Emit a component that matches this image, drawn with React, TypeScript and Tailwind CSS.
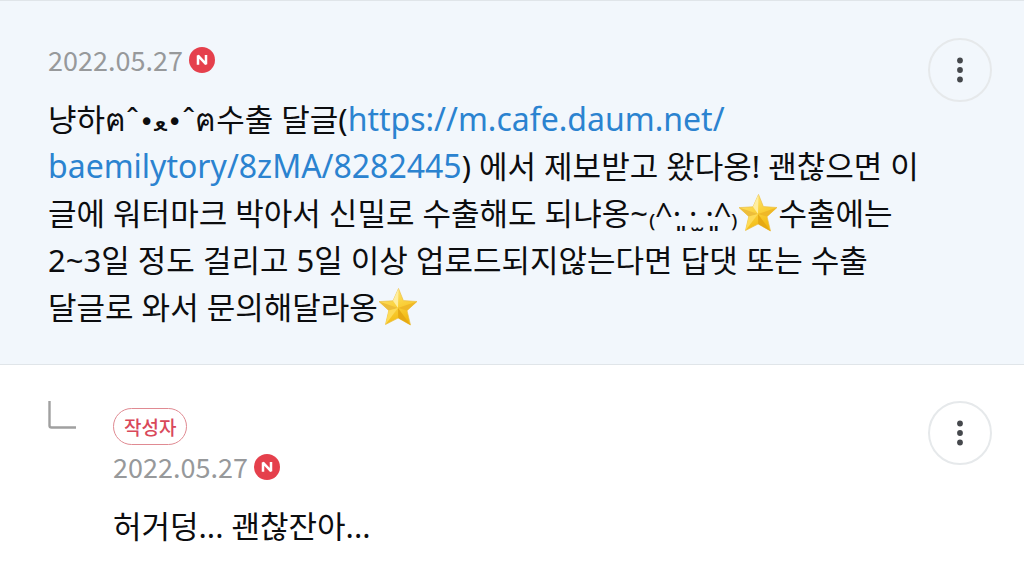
import type { ReactNode } from 'react';

function NewBadge() {
  return (
    <svg width="26" height="26" viewBox="0 0 26 26" role="img" aria-label="N">
      <circle cx="13" cy="13" r="13" fill="#e5404c" />
      <path
        d="M9 17.8V8.6L17 17.2V8"
        fill="none"
        stroke="#fff"
        strokeWidth="2.5"
        strokeLinejoin="bevel"
      />
    </svg>
  );
}

function Star() {
  return (
    <svg className="-mt-2 inline-block align-middle" width="40" height="40" viewBox="0 0 40 40" role="img" aria-label="⭐">
      <defs>
        <linearGradient id="star" x1="0" y1="0" x2="0.4" y2="1">
          <stop offset="0" stopColor="#fde884" />
          <stop offset="0.5" stopColor="#fbd443" />
          <stop offset="1" stopColor="#f2b90f" />
        </linearGradient>
      </defs>
      <path
        d="M20.5 1.5L25.4 13.6L39 14.5L29 23.6L32.5 38L20.2 31L7.5 37.5L10.8 23.4L1 14.6L15 13.8Z"
        fill="url(#star)"
        stroke="#ebc04a"
        strokeWidth="0.7"
        strokeLinejoin="round"
      />
      <path d="M20.5 1.5L20 21L15 13.8Z" fill="#feeea0" />
      <path d="M1 14.6L20 21L10.8 23.4Z" fill="#edbd3a" />
      <path d="M39 14.5L20 21L29 23.6Z" fill="#efb827" />
      <path d="M32.5 38L20 21L20.2 31Z" fill="#e6a914" />
      <path d="M7.5 37.5L20 21L10.8 23.4Z" fill="#fddb58" />
    </svg>
  );
}

function MoreButton() {
  return (
    <button
      type="button"
      aria-label="더보기"
      className="flex size-16 shrink-0 items-center justify-center rounded-full border-2 border-[#e6e9eb]"
    >
      <svg width="6" height="26" viewBox="0 0 6 26" fill="#45484c">
        <circle cx="3" cy="3.5" r="2.9" />
        <circle cx="3" cy="13" r="2.9" />
        <circle cx="3" cy="22.5" r="2.9" />
      </svg>
    </button>
  );
}

function DateRow({ date }: { date: string }) {
  return (
    <div className="flex items-center gap-1.5 text-[27px] leading-[43px] text-[#97999b]">
      <time>{date}</time>
      <NewBadge />
    </div>
  );
}

function CommentText({ children }: { children: ReactNode }) {
  return (
    <p className="font-['Noto_Sans','Noto_Sans_CJK_KR',sans-serif] text-[31px] leading-[47px] whitespace-nowrap text-[#0c0d0f]">
      {children}
    </p>
  );
}

export default function App() {
  return (
    <main className="min-h-screen bg-white font-['Noto_Sans_CJK_KR',sans-serif]">
      <article className="flex justify-between border-y border-[#e0e5e9] bg-[#f2f7fc] pt-[37px] pr-8 pb-[33px] pl-12">
        <div className="min-w-0">
          <DateRow date="2022.05.27" />
          <div className="mt-[15px]">
            <CommentText>
              냥하ฅˆ
              <span className="font-['DejaVu_Sans',sans-serif] text-[26px] leading-none">•ﻌ•</span>
              ˆฅ수출 달글(
              <a
                href="https://m.cafe.daum.net/baemilytory/8zMA/8282445"
                className="text-[32px] leading-none text-[#2b83d0]"
              >
                https://m.cafe.daum.net/
                <br />
                baemilytory/8zMA/8282445
              </a>
              ) 에서 제보받고 왔다옹! 괜찮으면 이
              <br />
              글에 워터마크 박아서 신밀로 수출해도 되냐옹~₍^·͈ ·̫ ·͈^₎
              <Star />
              수출에는
              <br />
              2~3일 정도 걸리고 5일 이상 업로드되지않는다면 답댓 또는 수출
              <br />
              달글로 와서 문의해달라옹
              <Star />
            </CommentText>
          </div>
        </div>
        <MoreButton />
      </article>

      <article className="flex pt-9 pr-8 pb-8 pl-12">
        <svg className="shrink-0" width="28" height="28" viewBox="0 0 28 28" aria-hidden="true">
          <path d="M1.5 0V24.5Q1.5 26.5 3.5 26.5H28" fill="none" stroke="#a0a0a0" strokeWidth="2.4" />
        </svg>
        <div className="ml-[37px] min-w-0 flex-1 pt-[7px]">
          <span className="inline-block rounded-full border border-[#e08a92] px-2.5 text-[19px] leading-[35px] font-medium text-[#d9485a]">
            작성자
          </span>
          <DateRow date="2022.05.27" />
          <div className="mt-[15px]">
            <CommentText>허거덩... 괜찮잔아...</CommentText>
          </div>
        </div>
        <MoreButton />
      </article>
    </main>
  );
}
